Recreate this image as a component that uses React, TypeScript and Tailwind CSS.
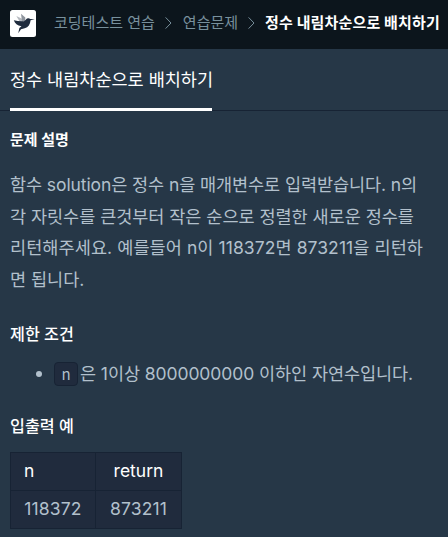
const crumbs = ["코딩테스트 연습", "연습문제"];

const description = [
  { text: "함수 solution은 정수 n을 매개변수로 입력받습니다. n의", tracking: "tracking-[-0.09px]" },
  { text: "각 자릿수를 큰것부터 작은 순으로 정렬한 새로운 정수를", tracking: "tracking-[-0.03px]" },
  { text: "리턴해주세요. 예를들어 n이 118372면 873211을 리턴하", tracking: "tracking-[0.08px]" },
  { text: "면 됩니다.", tracking: "tracking-normal" },
];

const Logo = () => (
  <svg viewBox="0 0 26 27" className="w-[26px] h-[27px] shrink-0">
    <rect width="26" height="27" rx="2.5" fill="#fff" />
    <path d="M6.3 6 13.5 9.6 13 12 10 12Z" fill="#b5b9bf" />
    <path d="M11 3.8 15.3 7.5 15.2 11 12 11.5Z" fill="#8f959e" />
    <path
      d="M3.8 10.2C7.5 11.2 11 11.6 14 11.2C15.5 10.8 16 8.8 17.8 8.3C18.7 8 19.5 8.3 20.2 8.9L24.8 9.3L20.6 10.2C20.2 14.2 18.4 17.2 14.7 18.3L11 19.3L8.2 23.2L9.4 18L11.5 16.2C7.3 15.6 5 13.8 3.8 10.2Z"
      fill="#1f2b3d"
    />
  </svg>
);

const Chevron = () => (
  <svg
    viewBox="0 0 7 12"
    fill="none"
    stroke="#78909c"
    strokeWidth="1"
    className="w-[7px] h-3 shrink-0"
  >
    <path d="M.6.4 6 6 .6 11.6" />
  </svg>
);

const App = () => {
  return (
    <div className="w-[448px] h-[537px] overflow-hidden bg-[#263747] font-['Inter','Noto_Sans_CJK_KR',sans-serif] text-[#b2c0cc]">
      <header className="flex items-center h-[49px] pl-[10px] pb-[3px] bg-[#0c151c] text-[15px] leading-6 whitespace-nowrap">
        <Logo />
        <nav className="flex items-center ml-[18px]">
          {crumbs.map((crumb) => (
            <div key={crumb} className="flex items-center gap-[10px] mr-[11px] text-[#78909c]">
              <span>{crumb}</span>
              <Chevron />
            </div>
          ))}
          <span className="-ml-px font-bold tracking-[0.15px] text-white">
            정수 내림차순으로 배치하기
          </span>
        </nav>
      </header>

      {/* Tab */}
      <div className="flex h-[62px] pl-[10px] border-b border-[#172334]">
        <h1 className="w-[202px] h-[62px] pt-[18px] border-b-3 border-white text-[17.5px] leading-[26px] font-normal text-white whitespace-nowrap">
          정수 내림차순으로 배치하기
        </h1>
      </div>

      <main className="px-[10px] pt-[17px]">
        <h2 className="text-[15px] leading-6 font-bold text-white">문제 설명</h2>
        <p className="mt-[17px] text-[17.5px] leading-[31.5px] whitespace-nowrap">
          {description.map(({ text, tracking }) => (
            <span key={text} className={`block ${tracking}`}>
              {text}
            </span>
          ))}
        </p>

        <h3 className="mt-[27px] text-[16.2px] leading-6 font-medium text-white">제한 조건</h3>
        <ul className="mt-[12px]">
          <li className="flex items-center h-8 pl-[26px] text-[17.5px] whitespace-nowrap">
            <span className="size-[6px] mr-3 rounded-full bg-[#b2c0cc]" />
            <code className="flex items-center justify-center w-6 h-6 mr-[2px] rounded border border-[#172334] bg-[#202b3d] font-['Noto_Sans_CJK_KR'] text-[15px]">
              n
            </code>
            <span className="tracking-[-0.08px]">은 1이상 8000000000 이하인 자연수입니다.</span>
          </li>
        </ul>

        <h3 className="mt-[24px] text-[16.2px] leading-6 font-medium text-white">입출력 예</h3>
        <table className="mt-[14px] w-[172px] table-fixed border-collapse bg-[#202b3d] text-[17.5px]">
          <thead>
            <tr className="h-[38px] text-white">
              <th className="w-[85px] border border-[#172334] pl-[13px] text-left font-normal">n</th>
              <th className="border border-[#172334] font-normal">return</th>
            </tr>
          </thead>
          <tbody>
            <tr className="h-[38px] tracking-[0.15px]">
              <td className="border border-[#172334] text-center">118372</td>
              <td className="border border-[#172334] text-center">873211</td>
            </tr>
          </tbody>
        </table>
      </main>
    </div>
  );
};

export default App;
